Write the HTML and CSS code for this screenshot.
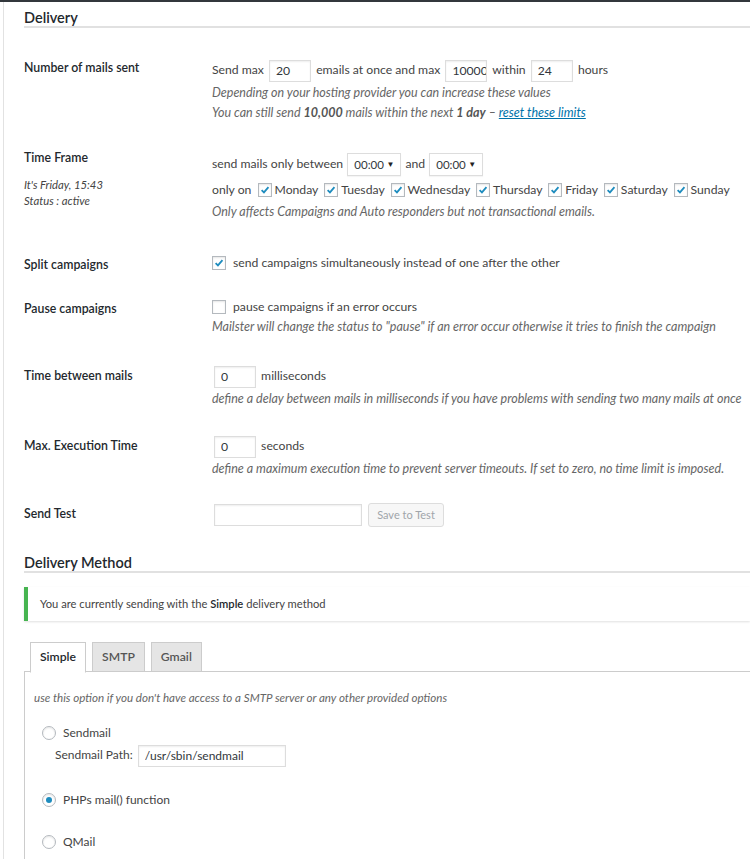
FILE: index.html
```html
<!DOCTYPE html>
<html>
<head>
    <title>Mailster Settings - Delivery</title>
    <meta charset="UTF-8">
    <meta name="viewport" content="width=device-width, initial-scale=1.0">
    <link rel="stylesheet" href="styles.css">
</head>
<body>
    <div class="top-bar"></div>
    <div class="wrap">
        <h2 class="section-title">Delivery</h2>

        <div class="form-row row-mails">
            <div class="label">Number of mails sent</div>
            <div class="field">
                <div class="line">Send max <input type="text" class="num" value="20"> emails at once and max <input type="text" class="num clip" value="10000"> within <input type="text" class="num" value="24"> hours</div>
                <p class="desc">Depending on your hosting provider you can increase these values</p>
                <p class="desc">You can still send <strong>10,000</strong> mails within the next <strong>1 day</strong> &ndash; <a href="#">reset these limits</a></p>
            </div>
        </div>

        <div class="form-row row-time">
            <div class="label">
                Time Frame
                <p class="label-info">It's Friday, 15:43<br>Status : active</p>
            </div>
            <div class="field">
                <div class="line">send mails only between
                    <span class="select">00:00<span class="arrow">&#9660;</span></span> and
                    <span class="select">00:00<span class="arrow">&#9660;</span></span>
                </div>
                <div class="line days">only on
                    <label class="day"><span class="cb checked"><svg viewBox="0 0 16 16"><path d="M3.5 8.2 L6.6 11.2 L12.6 4.2"/></svg></span>Monday</label>
                    <label class="day"><span class="cb checked"><svg viewBox="0 0 16 16"><path d="M3.5 8.2 L6.6 11.2 L12.6 4.2"/></svg></span>Tuesday</label>
                    <label class="day"><span class="cb checked"><svg viewBox="0 0 16 16"><path d="M3.5 8.2 L6.6 11.2 L12.6 4.2"/></svg></span>Wednesday</label>
                    <label class="day"><span class="cb checked"><svg viewBox="0 0 16 16"><path d="M3.5 8.2 L6.6 11.2 L12.6 4.2"/></svg></span>Thursday</label>
                    <label class="day"><span class="cb checked"><svg viewBox="0 0 16 16"><path d="M3.5 8.2 L6.6 11.2 L12.6 4.2"/></svg></span>Friday</label>
                    <label class="day"><span class="cb checked"><svg viewBox="0 0 16 16"><path d="M3.5 8.2 L6.6 11.2 L12.6 4.2"/></svg></span>Saturday</label>
                    <label class="day"><span class="cb checked"><svg viewBox="0 0 16 16"><path d="M3.5 8.2 L6.6 11.2 L12.6 4.2"/></svg></span>Sunday</label>
                </div>
                <p class="desc">Only affects Campaigns and Auto responders but not transactional emails.</p>
            </div>
        </div>

        <div class="form-row row-split">
            <div class="label">Split campaigns</div>
            <div class="field">
                <label class="cb-line"><span class="cb checked"><svg viewBox="0 0 16 16"><path d="M3.5 8.2 L6.6 11.2 L12.6 4.2"/></svg></span>send campaigns simultaneously instead of one after the other</label>
            </div>
        </div>

        <div class="form-row row-pause">
            <div class="label">Pause campaigns</div>
            <div class="field">
                <label class="cb-line"><span class="cb"></span>pause campaigns if an error occurs</label>
                <p class="desc">Mailster will change the status to "pause" if an error occur otherwise it tries to finish the campaign</p>
            </div>
        </div>

        <div class="form-row row-delay">
            <div class="label">Time between mails</div>
            <div class="field">
                <div class="line-sm"><input type="text" class="num" value="0"> milliseconds</div>
                <p class="desc">define a delay between mails in milliseconds if you have problems with sending two many mails at once</p>
            </div>
        </div>

        <div class="form-row row-exec">
            <div class="label">Max. Execution Time</div>
            <div class="field">
                <div class="line-sm"><input type="text" class="num" value="0"> seconds</div>
                <p class="desc">define a maximum execution time to prevent server timeouts. If set to zero, no time limit is imposed.</p>
            </div>
        </div>

        <div class="form-row row-test">
            <div class="label">Send Test</div>
            <div class="field">
                <div class="line-sm"><input type="text" class="wide" value=""> <button class="button" disabled>Save to Test</button></div>
            </div>
        </div>

        <h2 class="section-title method-title">Delivery Method</h2>

        <div class="notice">You are currently sending with the <strong>Simple</strong> delivery method</div>

        <div class="tabs">
            <span class="tab active">Simple</span>
            <span class="tab">SMTP</span>
            <span class="tab">Gmail</span>
        </div>
        <div class="tab-panel">
            <p class="desc">use this option if you don't have access to a SMTP server or any other provided options</p>
            <div class="radio-list">
                <label class="radio-line"><span class="radio"></span>Sendmail</label>
                <div class="path-line">Sendmail Path: <input type="text" class="wide" value="/usr/sbin/sendmail"></div>
                <label class="radio-line php"><span class="radio checked"></span>PHPs mail() function</label>
                <label class="radio-line qmail"><span class="radio"></span>QMail</label>
            </div>
        </div>
    </div>
</body>
</html>
```

FILE: styles.css
```css
body {
    margin: 0;
    font-family: Lato, "Noto Sans", sans-serif;
    font-size: 12.2px;
    color: #444;
    background-color: #fff;
    overflow: hidden;
    white-space: nowrap;
}
.top-bar {
    height: 2px;
    background-color: #32373c;
}
.wrap {
    margin-left: 3px;
    border-left: 1px solid #e2e2e2;
    padding-left: 20px;
    min-height: 900px;
}
.section-title {
    margin: 0;
    padding-top: 8px;
    font-size: 14.5px;
    line-height: 16px;
    font-weight: 600;
    color: #23282d;
    border-bottom: 2px solid #e1e1e1;
}
.form-row {
    display: grid;
    grid-template-columns: 188px 1fr;
    padding: 12px 0;
}
.label {
    font-size: 12.3px;
    font-weight: 600;
    color: #23282d;
    line-height: 20px;
    padding-top: 3px;
}
.label-info {
    margin: 9px 0 0;
    font-size: 11.3px;
    font-weight: 400;
    font-style: italic;
    line-height: 16px;
    color: #444;
}
.line {
    height: 26px;
    line-height: 26px;
}
.line-sm {
    height: 26px;
    line-height: 26px;
}
.desc {
    margin: 0;
    font-size: 12.5px;
    font-style: italic;
    color: #666;
    line-height: 20px;
}
.desc strong {
    color: #555;
}
a {
    color: #0073aa;
}
input[type="text"] {
    height: 22px;
    box-sizing: border-box;
    border: 1px solid #ddd;
    box-shadow: inset 0 1px 2px rgba(0, 0, 0, 0.07);
    padding: 0 6px;
    font-family: inherit;
    font-size: 12.2px;
    color: #32373c;
    vertical-align: middle;
    margin: 0 2px;
    outline: none;
}
input.num {
    width: 42px;
}
input.clip {
    padding-right: 0;
}
input.wide {
    width: 148px;
}
.select {
    display: inline-block;
    box-sizing: border-box;
    width: 54px;
    height: 23px;
    line-height: 22px;
    border: 1px solid #ddd;
    box-shadow: 0 1px 1px rgba(0, 0, 0, 0.04);
    padding-left: 6px;
    font-size: 11.5px;
    color: #32373c;
    vertical-align: middle;
    position: relative;
    margin: 0 1px;
}
.select .arrow {
    position: absolute;
    right: 6px;
    top: -1px;
    font-size: 8px;
    color: #222;
}
.cb {
    display: inline-block;
    box-sizing: border-box;
    width: 14px;
    height: 14px;
    border: 1px solid #b4b9be;
    background-color: #fff;
    box-shadow: inset 0 1px 2px rgba(0, 0, 0, 0.1);
    vertical-align: middle;
    margin: -2px 3px 0 3px;
}
.cb svg {
    display: block;
    width: 12px;
    height: 12px;
    fill: none;
    stroke: #1e8cbe;
    stroke-width: 2.4;
}
.cb-line {
    display: block;
    height: 21px;
    line-height: 21px;
}
.cb-line .cb {
    margin: -2px 7px 0 0;
}
.row-mails {
    margin-top: 17px;
}
.row-mails .label {
    padding-top: 1px;
}
.row-time {
    padding-top: 16px;
}
.row-time .label {
    padding-top: 0;
    margin-top: -3px;
}
.days {
    margin-top: 1px;
    height: 24px;
    line-height: 24px;
}
.row-split {
    padding-top: 18px;
    padding-bottom: 9px;
}
.row-delay {
    padding-top: 14px;
}
.row-exec {
    padding-bottom: 10px;
}
.button {
    height: 24px;
    padding: 0 8px;
    border: 1px solid #ddd;
    border-radius: 3px;
    background-color: #f7f7f7;
    color: #a0a5aa;
    font-family: inherit;
    font-size: 11px;
    vertical-align: middle;
    margin-left: 1px;
}
.method-title {
    margin-top: 8px;
}
.notice {
    margin-top: 14px;
    height: 34px;
    line-height: 34px;
    padding: 0 12px;
    border-left: 4px solid #46b450;
    box-shadow: 0 1px 2px rgba(0, 0, 0, 0.12);
    background-color: #fff;
    font-size: 11.2px;
    color: #444;
}
.notice strong {
    font-weight: 600;
    color: #23282d;
}
.tabs {
    display: flex;
    gap: 6px;
    margin-top: 21px;
    padding-left: 6px;
    height: 30px;
    position: relative;
    z-index: 1;
}
.tab {
    box-sizing: border-box;
    height: 30px;
    line-height: 28px;
    padding: 0 9px;
    border: 1px solid #ccc;
    background-color: #e5e5e5;
    color: #555;
    font-weight: 600;
    font-size: 12.2px;
}
.tab.active {
    background-color: #fff;
    color: #23282d;
    border-bottom-color: #fff;
    height: 31px;
}
.tab-panel {
    margin-top: -1px;
    border-top: 1px solid #ccc;
    border-left: 1px solid #ccc;
    padding: 16px 0 0 9px;
    min-height: 200px;
    font-size: 12px;
}
.tab-panel .desc {
    font-size: 11.6px;
}
.radio-list {
    padding-left: 8px;
    margin-top: 15px;
}
.radio-line {
    display: block;
    height: 20px;
    line-height: 20px;
}
.radio {
    display: inline-block;
    box-sizing: border-box;
    width: 14px;
    height: 14px;
    border: 1px solid #b4b9be;
    border-radius: 50%;
    box-shadow: inset 0 1px 2px rgba(0, 0, 0, 0.1);
    vertical-align: middle;
    margin: -2px 7px 0 0;
    position: relative;
}
.radio.checked::before {
    content: "";
    position: absolute;
    left: 3px;
    top: 3px;
    width: 6px;
    height: 6px;
    border-radius: 50%;
    background-color: #1e8cbe;
}
.path-line {
    padding-left: 13px;
    height: 24px;
    line-height: 24px;
}
.path-line input.wide {
    font-size: 12px;
}
.radio-line.php {
    margin-top: 23px;
}
.radio-line.qmail {
    margin-top: 22px;
}
```
